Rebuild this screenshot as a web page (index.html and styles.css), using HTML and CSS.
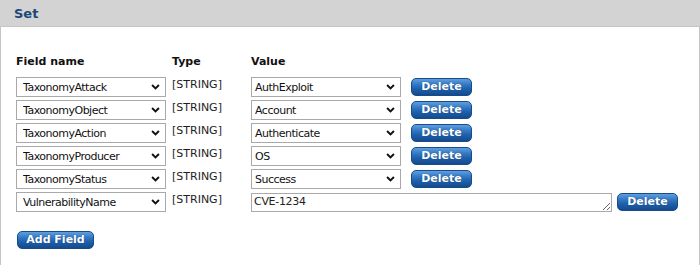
FILE: index.html
```html
<!DOCTYPE html>
<html>
<head>
<meta charset="utf-8">
<link rel="stylesheet" href="styles.css">
</head>
<body>
<div class="panel">
  <div class="panel-head">Set</div>
  <div class="panel-body">
    <div class="grid">
      <div class="th">Field name</div><div class="th">Type</div><div class="th">Value</div>

      <div class="sel"><select><option>TaxonomyAttack</option></select><svg class="chev" viewBox="0 0 10 7"><path d="M1 1.2 L5 5.2 L9 1.2" /></svg></div>
      <div class="type">[STRING]</div>
      <div class="val"><div class="sel"><select><option>AuthExploit</option></select><svg class="chev" viewBox="0 0 10 7"><path d="M1 1.2 L5 5.2 L9 1.2" /></svg></div><button class="btn del">Delete</button></div>

      <div class="sel"><select><option>TaxonomyObject</option></select><svg class="chev" viewBox="0 0 10 7"><path d="M1 1.2 L5 5.2 L9 1.2" /></svg></div>
      <div class="type">[STRING]</div>
      <div class="val"><div class="sel"><select><option>Account</option></select><svg class="chev" viewBox="0 0 10 7"><path d="M1 1.2 L5 5.2 L9 1.2" /></svg></div><button class="btn del">Delete</button></div>

      <div class="sel"><select><option>TaxonomyAction</option></select><svg class="chev" viewBox="0 0 10 7"><path d="M1 1.2 L5 5.2 L9 1.2" /></svg></div>
      <div class="type">[STRING]</div>
      <div class="val"><div class="sel"><select><option>Authenticate</option></select><svg class="chev" viewBox="0 0 10 7"><path d="M1 1.2 L5 5.2 L9 1.2" /></svg></div><button class="btn del">Delete</button></div>

      <div class="sel"><select><option>TaxonomyProducer</option></select><svg class="chev" viewBox="0 0 10 7"><path d="M1 1.2 L5 5.2 L9 1.2" /></svg></div>
      <div class="type">[STRING]</div>
      <div class="val"><div class="sel"><select><option>OS</option></select><svg class="chev" viewBox="0 0 10 7"><path d="M1 1.2 L5 5.2 L9 1.2" /></svg></div><button class="btn del">Delete</button></div>

      <div class="sel"><select><option>TaxonomyStatus</option></select><svg class="chev" viewBox="0 0 10 7"><path d="M1 1.2 L5 5.2 L9 1.2" /></svg></div>
      <div class="type">[STRING]</div>
      <div class="val"><div class="sel"><select><option>Success</option></select><svg class="chev" viewBox="0 0 10 7"><path d="M1 1.2 L5 5.2 L9 1.2" /></svg></div><button class="btn del">Delete</button></div>

      <div class="sel"><select><option>VulnerabilityName</option></select><svg class="chev" viewBox="0 0 10 7"><path d="M1 1.2 L5 5.2 L9 1.2" /></svg></div>
      <div class="type">[STRING]</div>
      <div class="val"><textarea class="ta">CVE-1234</textarea><button class="btn del2">Delete</button></div>
    </div>
    <button class="btn add">Add Field</button>
  </div>
</div>
</body>
</html>
```

FILE: styles.css
```css
html, body {
  margin: 0;
  padding: 0;
  background: #fff;
  font-family: "DejaVu Sans", Verdana, sans-serif;
  font-size: 11px;
  color: #222;
}
.panel {
  width: 700px;
}
.panel-head {
  background: #d3d3d3;
  border-bottom: 1px solid #c4c4c4;
  box-sizing: border-box;
  height: 27px;
  padding: 6px 0 0 14px;
  font-size: 13px;
  font-weight: bold;
  color: #1d4779;
}
.panel-body {
  border-left: 1px solid #c6c6c6;
  border-right: 1px solid #c6c6c6;
  padding: 28px 0 17px 15px;
  height: 238px;
  box-sizing: border-box;
}
.grid {
  display: grid;
  grid-template-columns: 156px 79px auto;
  row-gap: 3px;
  align-items: start;
}
.th {
  font-weight: bold;
  font-size: 11px;
  color: #111;
  line-height: 14px;
  margin-bottom: 5px;
}
.sel {
  position: relative;
  width: 150px;
  height: 20px;
}
.sel select {
  appearance: none;
  -webkit-appearance: none;
  width: 150px;
  height: 20px;
  box-sizing: border-box;
  border: 1px solid #a9a9a9;
  border-radius: 0;
  background: #fff;
  font-family: "DejaVu Sans", Verdana, sans-serif;
  font-size: 11px;
  letter-spacing: -0.5px;
  color: #111;
  padding: 0 0 0 6px;
  margin: 0;
  outline: none;
}
.val .sel select {
  padding-left: 3px;
}
.chev {
  position: absolute;
  right: 6px;
  top: 7px;
  width: 9px;
  height: 6px;
  fill: none;
  stroke: #111;
  stroke-width: 2.2;
  pointer-events: none;
}
.type {
  line-height: 14px;
  padding-top: 1px;
  color: #1e1e1e;
}
.val {
  display: flex;
  align-items: center;
  height: 20px;
}
.btn {
  font-family: "DejaVu Sans", Verdana, sans-serif;
  font-weight: bold;
  font-size: 11px;
  color: #fff;
  height: 18px;
  box-sizing: border-box;
  border: 1px solid #184b89;
  border-radius: 5px;
  background: linear-gradient(#5f9fe0 0%, #3378c4 35%, #1f61ad 60%, #154a8c 100%);
  padding: 0;
  line-height: 16px;
  text-shadow: 0 0 1px #0c3466;
  cursor: pointer;
}
.del {
  width: 61px;
  margin-left: 10px;
}
.ta {
  width: 361px;
  height: 19px;
  box-sizing: border-box;
  border: 1px solid #a9a9a9;
  font-family: "DejaVu Sans", Verdana, sans-serif;
  font-size: 11px;
  letter-spacing: -0.3px;
  color: #222;
  padding: 1px 2px;
  margin: 0;
  line-height: 14px;
  overflow: hidden;
}
.del2 {
  width: 61px;
  margin-left: 5px;
}
.add {
  margin-top: 19px;
  margin-left: 1px;
  width: 77px;
}
```
